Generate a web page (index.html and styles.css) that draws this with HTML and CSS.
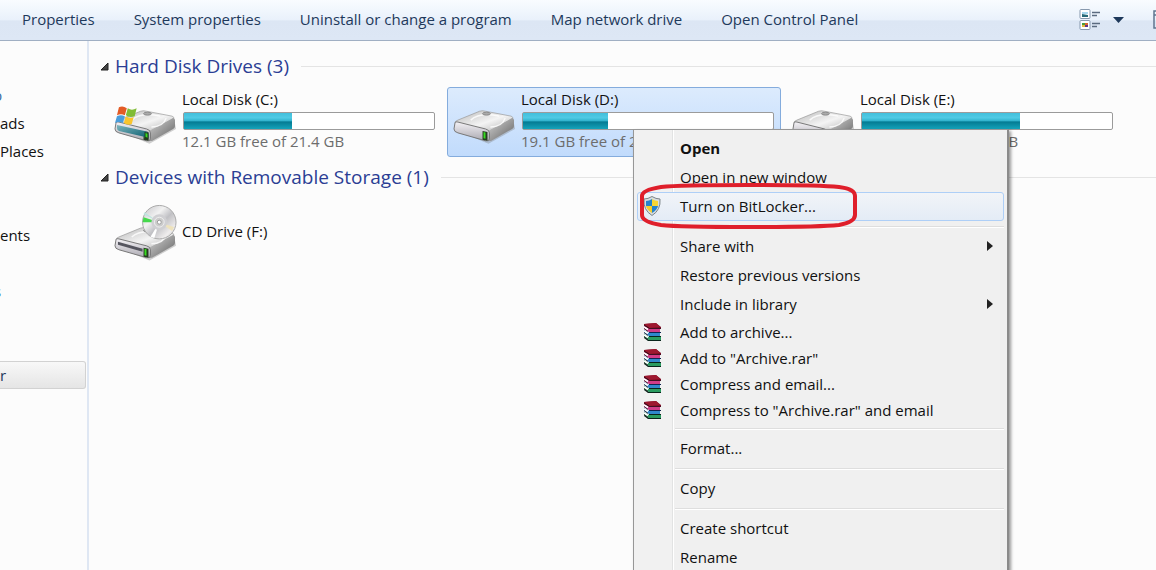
FILE: index.html
```html
<!DOCTYPE html>
<html lang="en">
<head>
<meta charset="utf-8">
<title>Computer</title>
<link rel="stylesheet" href="styles.css">
</head>
<body>
<svg class="defs" aria-hidden="true">
  <defs>
    <linearGradient id="top" x1="0" y1="0" x2="1" y2="1"><stop offset="0" stop-color="#b8b8b8"/><stop offset=".55" stop-color="#f4f4f4"/><stop offset="1" stop-color="#b0b0b0"/></linearGradient>
    <linearGradient id="side" x1="0" y1="0" x2="1" y2="1"><stop offset="0" stop-color="#d8d8d8"/><stop offset="1" stop-color="#606060"/></linearGradient>
    <linearGradient id="front" x1="0" y1="0" x2="0" y2="1"><stop offset="0" stop-color="#f4f2f6"/><stop offset="1" stop-color="#aaa8b0"/></linearGradient>
    <linearGradient id="teal" x1="0" y1="0" x2="1" y2="1"><stop offset="0" stop-color="#7db4bd"/><stop offset="1" stop-color="#0b5f70"/></linearGradient>
    <linearGradient id="disc" x1="0" y1="0" x2="1" y2="1"><stop offset="0" stop-color="#c2c2c6"/><stop offset=".35" stop-color="#f2f2f2"/><stop offset=".55" stop-color="#c0c0c4"/><stop offset=".8" stop-color="#f0eeee"/><stop offset="1" stop-color="#bbb"/></linearGradient>
    <symbol id="drive" viewBox="0 0 64 36">
      <path d="M5 22L36 35L63 20L62 15Z" fill="#777" opacity=".35"/>
      <path d="M2 14Q2 12 5 11L27 2Q30 1 33 2L59 7Q62 8 60 10L37 22Q35 23 32 22Z" fill="url(#top)" stroke="#999" stroke-width=".7"/>
      <path d="M36 22L60 9Q62 9 62 12V17Q62 19 60 20L39 32Q36 33 35 31Z" fill="url(#side)"/>
      <path d="M2 14Q2 12 5 13L33 20Q37 21 37 24V30Q37 33 33 32L5 24Q1 23 1 20Z" fill="url(#front)" stroke="#777" stroke-width="1"/>
      <path d="M38 18Q50 18 53 9M18 11Q27 3 47 7" fill="none" stroke="#fff" stroke-width="1.5" opacity=".8"/>
      <ellipse cx="34" cy="4.500" rx="4" ry="1.500" fill="#aaa" stroke="#777" stroke-width=".7"/>
      <path d="M30 22L35 23V32L30 31Z" fill="#273b21"/><path d="M31 23L33 23.500V30L31 29.500Z" fill="#36dc20"/>
    </symbol>
    <symbol id="books" viewBox="0 0 18 18">
      <path d="M1 1L13 0L18 4V6L6 7L1 3Z" fill="#800c24"/><path d="M1 1L13 0L17 4L6 5Z" fill="#9e1830"/>
      <path d="M1 3L6 6L17 6V9H6L1 6Z" fill="#d03c88"/><path d="M6 5H18V6H6Z" fill="#421023"/>
      <path d="M1 7L6 10H17V13H6L1 10Z" fill="#3088cc"/><path d="M6 9H18V10H6Z" fill="#102451"/>
      <path d="M1 11L6 14H18V17H6L1 14Z" fill="#2a9c60"/><path d="M6 13H18V14H6ZM6 17H18V18H5L1 15V14Z" fill="#08251b"/>
      <path d="M1 4L5 6.500M1 8L5 10.500M1 12L5 14.500" stroke="#fff" stroke-width="1.800"/>
      <path d="M1 5.500L5 8.500M1 9.500L5 12.500M1 13.500L5 16.500M1 2L6 5" stroke="#221419" stroke-width=".8"/>
    </symbol>
  </defs>
</svg>

<header class="toolbar">
  <nav class="commands">
    <button type="button">Properties</button>
    <button type="button">System properties</button>
    <button type="button">Uninstall or change a program</button>
    <button type="button">Map network drive</button>
    <button type="button">Open Control Panel</button>
  </nav>
  <div class="view-tools">
    <button type="button" class="view" aria-label="Change your view">
      <svg width="46" height="22" viewBox="0 0 46 22">
        <g fill="#fff" stroke="#8799ae"><rect x="1" y=".5" width="10" height="9" rx="1"/><rect x="1" y="11.500" width="10" height="9" rx="1"/></g>
        <path d="M3 3H9V5H3Z" fill="#a8d8ee"/><path d="M3 5L9 6V8H3Z" fill="#276a78"/>
        <path d="M3 14H6V16H3Z" fill="#4a9d3c"/><path d="M6 14H9V16H6Z" fill="#d9652c"/><path d="M3 16H6V18H3Z" fill="#e2b83a"/><path d="M6 16H9V18H6Z" fill="#63328a"/>
        <path d="M13 3.500H21M13 6.500H18M13 14.500H21M13 17.500H18" stroke="#5b6b80" stroke-width="1.500"/>
        <path d="M34 8H45L39.500 14Z" fill="#1e395b"/>
      </svg>
    </button>
    <button type="button" class="pane" aria-label="Show the preview pane">
      <svg width="3" height="20" viewBox="0 0 3 20"><path d="M3 1H1V18H3M1 5H3" fill="none" stroke="#60758f" stroke-width="1.500"/></svg>
    </button>
  </div>
</header>

<div class="body">
  <nav class="sidebar">
    <a href="#" class="root cut">p</a>
    <a href="#">ads</a>
    <a href="#">Places</a>
    <a href="#" class="third">ents</a>
    <a href="#" class="second root cut-more">s</a>
    <a href="#" class="third selected">r</a>
  </nav>

  <main class="content">
    <section>
      <h2><svg class="fold" viewBox="0 0 9 9"><path d="M8 1V8H1Z" fill="#444" stroke="#222"/></svg>Hard Disk Drives (3)</h2>
      <div class="tiles">
        <article class="tile">
          <svg class="icon" viewBox="0 0 64 40">
            <use href="#drive" y="4" width="64" height="36"/>
            <path d="M3 20L31 26Q35 27 35 30V33L5 26Q3 25 3 23Z" fill="url(#teal)"/>
            <path d="M31 27L35 28V35L31 34Z" fill="#203b1c"/><path d="M32 28L34 29V33L32 32Z" fill="#36dc20"/>
            <path d="M5 2Q9 0 13 3L11 10Q7 8 3 10Z" fill="#e35b25"/><path d="M14 3Q18 6 23 3L21 11Q16 13 12 10Z" fill="#80bc35"/>
            <path d="M3 11Q7 9 11 11L9 18Q5 16 1 18Z" fill="#4a9ddb"/><path d="M12 11Q16 14 20 12L18 19Q14 21 10 18Z" fill="#fac52c"/>
          </svg>
          <div class="info"><h3>Local Disk (C:)</h3><div class="bar"><span style="width:43%"></span></div><p>12.1 GB free of 21.4 GB</p></div>
        </article>
        <article class="tile active">
          <svg class="icon" viewBox="0 0 64 40"><use href="#drive" y="4" width="64" height="36"/></svg>
          <div class="info"><h3>Local Disk (D:)</h3><div class="bar"><span style="width:34%"></span></div><p>19.1 GB free of 29.2 GB</p></div>
        </article>
        <article class="tile">
          <svg class="icon" viewBox="0 0 64 40"><use href="#drive" y="4" width="64" height="36"/></svg>
          <div class="info"><h3>Local Disk (E:)</h3><div class="bar"><span style="width:63%"></span></div><p>17.3 GB free of 46.9GB</p></div>
        </article>
      </div>
    </section>
    <section>
      <h2><svg class="fold" viewBox="0 0 9 9"><path d="M8 1V8H1Z" fill="#444" stroke="#222"/></svg>Devices with Removable Storage (1)</h2>
      <div class="tiles">
        <article class="tile">
          <svg class="icon cd" viewBox="0 0 64 58">
            <use href="#drive" y="22" width="64" height="36"/>
            <path d="M4 38L29 45V48L4 41Z" fill="#55555f"/>
            <circle cx="46" cy="18" r="17" fill="url(#disc)" stroke="#aaa"/>
            <path d="M46 18L30 13L29 18Z" fill="#45d94c"/><path d="M46 18L30 10L31 8Z" fill="#bfe5df"/><path d="M46 18L61 23L59 27Z" fill="#eee3bd"/><path d="M46 18L37 33L41 34Z" fill="#fff"/>
            <circle cx="46" cy="18" r="8" fill="#cfcfd2"/>
            <circle cx="46" cy="18" r="5" fill="#ccc" stroke="#eee"/><circle cx="46" cy="18" r="2" fill="#fff" stroke="#999"/>
          </svg>
          <div class="info"><h3>CD Drive (F:)</h3></div>
        </article>
      </div>
    </section>
  </main>
</div>

<menu class="context">
  <li><button type="button" class="default">Open</button></li>
  <li><button type="button">Open in new window</button></li>
  <li class="marked">
    <button type="button" class="with-icon hover">
      <svg width="18" height="20" viewBox="0 0 18 20">
        <path d="M9 .5Q13 3 17 3Q18 14 9 19.500Q0 14 1 3Q5 3 9 .5Z" fill="#d8dde0" stroke="#7c8588"/>
        <path d="M9 3V10H3V5Q6 5 9 3Z" fill="#2583cc"/><path d="M9 3Q12 5 15 5V10H9Z" fill="#f7d533"/>
        <path d="M3 10H9V17Q4 14 3 10Z" fill="#f5cf2b"/><path d="M9 10H15Q14 14 9 17Z" fill="#2583cc"/>
      </svg>Turn on BitLocker...</button>
    <svg class="ring" viewBox="0 0 220 46" aria-hidden="true"><path d="M3 13Q3 7 22 4Q40 2 110 2Q180 2 200 4Q216 6 216 13V32Q216 39 200 42Q180 44 110 44Q40 44 22 42Q3 39 3 32Z" fill="none" stroke="#df1f2b" stroke-width="4"/></svg>
  </li>
  <li class="rule"></li>
  <li><button type="button">Share with<svg class="more" viewBox="0 0 6 10"><path d="M0 0L6 5L0 10Z"/></svg></button></li>
  <li><button type="button">Restore previous versions</button></li>
  <li><button type="button">Include in library<svg class="more" viewBox="0 0 6 10"><path d="M0 0L6 5L0 10Z"/></svg></button></li>
  <li><button type="button" class="with-icon short"><svg width="18" height="18"><use href="#books"/></svg>Add to archive...</button></li>
  <li><button type="button" class="with-icon short"><svg width="18" height="18"><use href="#books"/></svg>Add to "Archive.rar"</button></li>
  <li><button type="button" class="with-icon short"><svg width="18" height="18"><use href="#books"/></svg>Compress and email...</button></li>
  <li><button type="button" class="with-icon short"><svg width="18" height="18"><use href="#books"/></svg>Compress to "Archive.rar" and email</button></li>
  <li class="rule"></li>
  <li><button type="button">Format...</button></li>
  <li class="rule"></li>
  <li><button type="button">Copy</button></li>
  <li class="rule"></li>
  <li><button type="button">Create shortcut</button></li>
  <li><button type="button">Rename</button></li>
</menu>
</body>
</html>
```
FILE: styles.css
```css
* { box-sizing: border-box; }

body {
  margin: 0;
  height: 100vh;
  display: flex;
  flex-direction: column;
  overflow: hidden;
  background: #fcfcfc;
  color: #111;
  font: 15px/20px "Open Sans", "Noto Sans", sans-serif;
}

button {
  padding: 0;
  border: 0;
  background: none;
  color: inherit;
  font: inherit;
  text-align: left;
  white-space: nowrap;
}

h2, h3, p, menu { margin: 0; padding: 0; font-weight: 400; }
svg { display: block; flex: none; }
.defs { position: absolute; width: 0; height: 0; }

.toolbar {
  flex: none;
  height: 41px;
  display: flex;
  justify-content: space-between;
  align-items: center;
  padding-left: 22px;
  border-bottom: 1px solid #a0afc3;
  background: linear-gradient(#f9fcff, #e9f1fb 50%, #dce6f4 52%, #dde7f5);
  color: #1e395b;
}
.commands { display: flex; gap: 39px; padding-bottom: 2px; }
.view-tools { display: flex; gap: 28px; }

.body { flex: 1; min-height: 0; display: flex; }

.sidebar {
  flex: none;
  width: 89px;
  padding-top: 40px;
  border-right: 2px solid #dfe7f3;
  overflow: hidden;
}
.sidebar a {
  display: block;
  height: 28px;
  line-height: 28px;
  color: #111;
  text-decoration: none;
}
.sidebar .root { color: #3a6ea5; }
.sidebar .cut { text-indent: -7px; }
.sidebar .cut-more { text-indent: -6px; }
.sidebar .second { margin-top: 28px; }
.sidebar .third { margin-top: 56px; }
.sidebar .selected {
  margin-right: 1px;
  border: 1px solid #d2d2d2;
  border-left: 0;
  border-radius: 0 3px 3px 0;
  background: linear-gradient(#f8f8f8, #e5e5e5);
  line-height: 26px;
  color: #1e395b;
}

.content { flex: 1; min-width: 0; padding: 11px 0 0 11px; }
.content section { margin-bottom: 6px; }
h2 {
  display: flex;
  align-items: center;
  gap: 6px;
  font-size: 19px;
  line-height: 28px;
  color: #2b3e94;
  white-space: nowrap;
}
h2::after { content: ""; flex: 1; margin-left: 6px; border-top: 1px solid #e4e4e4; }
.fold { width: 9px; height: 9px; }

.tiles {
  display: grid;
  grid-template-columns: repeat(3, minmax(0, 334px));
  gap: 5px;
  padding: 7px 0 0 8px;
}
.tile {
  height: 70px;
  display: flex;
  align-items: center;
  gap: 5px;
  padding: 0 6px 4px 5px;
  border: 1px solid transparent;
  border-radius: 3px;
}
.tile.active { border-color: #84acdd; background: linear-gradient(#dcebfd, #c1dbfc); }
.icon { width: 63px; height: 40px; margin-top: 10px; }
.icon.cd { height: 58px; margin: 4px 0 0; }
.info { flex: 1; min-width: 0; white-space: nowrap; }
.info h3 { font-size: 15px; }
.info p { color: #6d6d6d; }
.bar {
  height: 18px;
  margin: 3px 0 1px 1px;
  border: 1px solid #9b9b9b;
  border-radius: 2px;
  background: #fff;
}
.bar span {
  display: block;
  height: 100%;
  background: linear-gradient(#42bfdc, #50cae4 30%, #2fb2cc 50%, #047a92 55%, #14a3ba);
}

.context {
  position: absolute;
  left: 633px;
  top: 129px;
  width: 376px;
  padding: 4px 3px;
  border: 1px solid #979797;
  border-right: 2px solid #8b8b8b;
  background: linear-gradient(90deg, #f1f1f1 38px, #e2e3e3 38px, #e2e3e3 39px, #fff 39px, #fff 40px, #f0f0f0 40px);
  box-shadow: 2px 2px 3px rgba(0, 0, 0, .4);
  list-style: none;
}
.context button {
  width: 100%;
  height: 29px;
  display: grid;
  grid-template-columns: 1fr 16px;
  align-items: center;
  padding: 0 0 2px 42px;
  border: 1px solid transparent;
  border-radius: 3px;
}
.context .with-icon { grid-template-columns: 18px 1fr; column-gap: 19px; padding-left: 5px; }
.context .short { height: 26px; padding-bottom: 0; }
.context .default { font-weight: 700; }
.context .hover { border-color: #aecff7; background: linear-gradient(#f1f4f8, #e4ecf6); }
.more { width: 6px; height: 10px; fill: #222; }
.rule {
  height: 2px;
  margin: 5px 0 4px 38px;
  border-top: 1px solid #dedede;
  border-bottom: 1px solid #fff;
}
.marked { position: relative; }
.ring { position: absolute; left: 2px; top: -9px; width: 220px; height: 46px; }
```
